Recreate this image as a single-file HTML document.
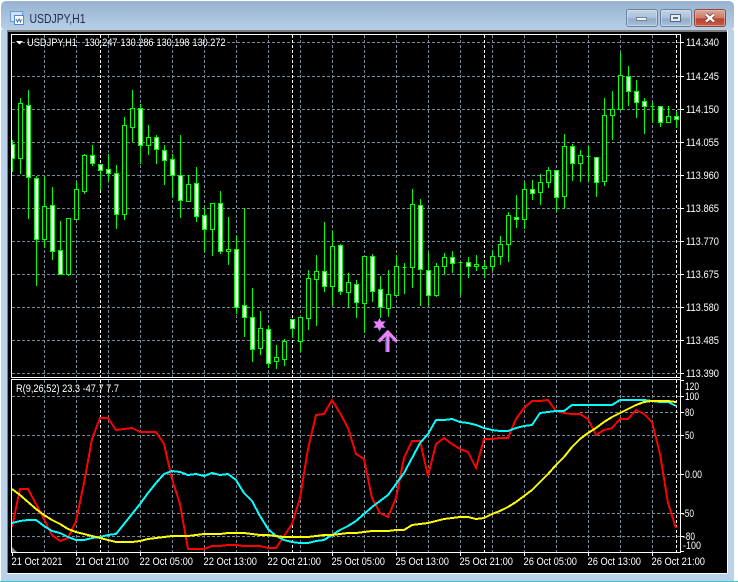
<!DOCTYPE html>
<html><head><meta charset="utf-8"><title>USDJPY,H1</title>
<style>
html,body{margin:0;padding:0;background:#fff;width:738px;height:582px;overflow:hidden}
svg{display:block}
text{font-family:"Liberation Sans",sans-serif}
.l{font-size:11px;fill:#fff}
</style></head><body>
<svg width="738" height="582" viewBox="0 0 738 582" xmlns="http://www.w3.org/2000/svg">
<defs>
<linearGradient id="tb" x1="0" y1="0" x2="0" y2="1"><stop offset="0" stop-color="#96b2cf"/><stop offset="1" stop-color="#b8d0e8"/></linearGradient>
<linearGradient id="bb" x1="0" y1="0" x2="0" y2="1"><stop offset="0" stop-color="#c4d5e7"/><stop offset=".5" stop-color="#a9bfd7"/><stop offset=".55" stop-color="#91abc8"/><stop offset="1" stop-color="#a9c2dc"/></linearGradient>
<linearGradient id="rb" x1="0" y1="0" x2="0" y2="1"><stop offset="0" stop-color="#dbaa9d"/><stop offset=".5" stop-color="#cc7a66"/><stop offset=".55" stop-color="#b8412d"/><stop offset="1" stop-color="#c4614a"/></linearGradient>
<clipPath id="mc"><rect x="12" y="35" width="668" height="342"/></clipPath>
<clipPath id="sc"><rect x="12" y="380" width="668" height="172"/></clipPath>
</defs>
<rect x="1" y="1" width="733" height="30" rx="5" fill="url(#tb)"/>
<rect x="1" y="30" width="733" height="551" fill="#b9d1ea"/>
<rect x="0" y="581" width="738" height="1" fill="#3cc5cc"/>
<rect x="7" y="30" width="721" height="544" fill="#fff"/>
<rect x="7" y="30" width="720" height="2" fill="#7c7c7c"/>
<rect x="7" y="30" width="1" height="543" fill="#7c7c7c"/>
<rect x="8" y="32" width="719" height="541" fill="#000"/>

<!-- title -->
<rect x="10.5" y="11.5" width="12" height="10" fill="#cfe2f7" stroke="#6d9bd1"/>
<rect x="14.5" y="15.5" width="9" height="9" fill="#fff" stroke="#5b88c4"/>
<path d="M16 19l1.5 3 1.5-3 1.5 3 1-3" fill="none" stroke="#3f74b8"/>
<text x="29.5" y="23" font-size="12.5" fill="#1f2a4c" textLength="56" lengthAdjust="spacingAndGlyphs">USDJPY,H1</text>

<!-- buttons -->
<rect x="626.5" y="9.5" width="31" height="17" rx="2.5" fill="url(#bb)" stroke="#6d8199"/>
<rect x="627.5" y="10.5" width="29" height="15" rx="1.5" fill="none" stroke="#dbe6f1" stroke-opacity=".55"/>
<rect x="636.5" y="17.5" width="10" height="3" fill="#eef2f7" stroke="#74859a"/>
<rect x="660.5" y="9.5" width="31" height="17" rx="2.5" fill="url(#bb)" stroke="#6d8199"/>
<rect x="661.5" y="10.5" width="29" height="15" rx="1.5" fill="none" stroke="#dbe6f1" stroke-opacity=".55"/>
<rect x="670.5" y="14.5" width="10" height="7" fill="#e6edf5" stroke="#56677a"/>
<rect x="673" y="17" width="5" height="2" fill="#5d6f84"/>
<rect x="694.5" y="9.5" width="31" height="17" rx="2.5" fill="url(#rb)" stroke="#8d4a3c"/>
<rect x="695.5" y="10.5" width="29" height="15" rx="1.5" fill="none" stroke="#efc9be" stroke-opacity=".5"/>
<path d="M706 14.5l8 7M714 14.5l-8 7" stroke="#7a3a30" stroke-width="4"/>
<path d="M706 14.5l8 7M714 14.5l-8 7" stroke="#fff" stroke-width="2.4"/>

<!-- main grid -->
<g clip-path="url(#mc)" shape-rendering="crispEdges" fill="none">
<path stroke="#778899" stroke-dasharray="3 2" d="M12 42.5H680M12 76.5H680M12 109.5H680M12 142.5H680M12 175.5H680M12 208.5H680M12 241.5H680M12 274.5H680M12 307.5H680M12 340.5H680M12 373.5H680"/>
<path stroke="#778899" stroke-dasharray="3 2" d="M44.5 35V377M76.5 35V377M108.5 35V377M140.5 35V377M172.5 35V377M204.5 35V377M236.5 35V377M268.5 35V377M300.5 35V377M332.5 35V377M364.5 35V377M396.5 35V377M428.5 35V377M460.5 35V377M492.5 35V377M524.5 35V377M556.5 35V377M588.5 35V377M620.5 35V377M652.5 35V377"/>
<path stroke="#fff" stroke-dasharray="3 2" d="M100.5 35V377M292.5 35V377M484.5 35V377M676.5 35V377"/>
<!-- wicks -->
<path stroke="#00ff00" d="M12.5 140V172M20.5 98V174M28.5 90V219M36.5 176V286M44.5 176V248M52.5 187V260M60.5 221V275M68.5 218V276M76.5 182V220M84.5 154V194M92.5 145V166M100.5 164V190M108.5 154V181M116.5 165V229M124.5 117V220M132.5 90V142M140.5 104V164M148.5 125V155M156.5 135V164M164.5 145V185M172.5 154V198M180.5 135V218M188.5 175V202M196.5 167V222M204.5 207V252M212.5 203V256M220.5 191V254M228.5 217V265M236.5 236V314M244.5 208V337M252.5 288V362M260.5 311V355M268.5 326V368M276.5 345V369M284.5 339V366M292.5 319V338M300.5 317V352M308.5 270V330M316.5 255V326M324.5 222V292M332.5 231V306M340.5 244V295M348.5 273V308M356.5 280V318M364.5 256V333M372.5 254V302M380.5 276V318M388.5 270V317M396.5 255V296M404.5 263V294M412.5 189V288M420.5 199V306M428.5 253V306M436.5 263V297M444.5 253V275M452.5 251V273M460.5 262V295M468.5 257V278M476.5 255V271M484.5 261V278M492.5 250V271M500.5 236V265M508.5 212V262M516.5 195V228M524.5 182V229M532.5 180V200M540.5 174V205M548.5 167V188M556.5 170V211M564.5 134V209M572.5 144V181M580.5 150V182M588.5 146V181M596.5 157V197M604.5 98V186M612.5 91V140M620.5 53V110M628.5 66V106M636.5 80V118M644.5 98V134M652.5 102V123M660.5 106V127M668.5 106V123M676.5 111V128"/>
<!-- hollow bodies -->
<path stroke="#00ff00" fill="#000" d="M18.5 103.5h4V158.5h-4zM42.5 206.5h4V239.5h-4zM66.5 218.5h4V274.5h-4zM74.5 189.5h4V219.5h-4zM82.5 155.5h4V191.5h-4zM122.5 125.5h4V214.5h-4zM130.5 108.5h4V127.5h-4zM146.5 137.5h4V145.5h-4zM186.5 184.5h4V201.5h-4zM210.5 203.5h4V229.5h-4zM226.5 249.5h4V251.5h-4zM258.5 328.5h4V348.5h-4zM274.5 357.5h4V361.5h-4zM282.5 341.5h4V359.5h-4zM298.5 317.5h4V341.5h-4zM306.5 278.5h4V318.5h-4zM314.5 271.5h4V279.5h-4zM330.5 246.5h4V286.5h-4zM346.5 282.5h4V292.5h-4zM362.5 256.5h4V303.5h-4zM386.5 294.5h4V308.5h-4zM394.5 266.5h4V295.5h-4zM402.5 267.5h4V267.5h-4zM410.5 204.5h4V267.5h-4zM434.5 266.5h4V295.5h-4zM442.5 257.5h4V266.5h-4zM458.5 262.5h4V262.5h-4zM474.5 264.5h4V266.5h-4zM482.5 266.5h4V268.5h-4zM490.5 256.5h4V266.5h-4zM498.5 244.5h4V256.5h-4zM506.5 215.5h4V244.5h-4zM522.5 189.5h4V219.5h-4zM538.5 182.5h4V192.5h-4zM546.5 170.5h4V182.5h-4zM562.5 146.5h4V196.5h-4zM578.5 155.5h4V163.5h-4zM586.5 156.5h4V156.5h-4zM602.5 115.5h4V181.5h-4zM610.5 109.5h4V115.5h-4zM618.5 75.5h4V109.5h-4zM650.5 106.5h4V106.5h-4zM666.5 116.5h4V122.5h-4z"/>
<!-- white bodies -->
<path stroke="#00ff00" fill="#fff" d="M10.5 144.5h4V158.5h-4zM26.5 105.5h4V177.5h-4zM34.5 178.5h4V239.5h-4zM50.5 205.5h4V251.5h-4zM58.5 250.5h4V274.5h-4zM90.5 155.5h4V163.5h-4zM98.5 164.5h4V170.5h-4zM106.5 169.5h4V173.5h-4zM114.5 173.5h4V214.5h-4zM138.5 108.5h4V145.5h-4zM154.5 137.5h4V149.5h-4zM162.5 150.5h4V160.5h-4zM170.5 159.5h4V175.5h-4zM178.5 175.5h4V200.5h-4zM194.5 183.5h4V216.5h-4zM202.5 215.5h4V229.5h-4zM218.5 203.5h4V251.5h-4zM234.5 249.5h4V307.5h-4zM242.5 305.5h4V317.5h-4zM250.5 317.5h4V349.5h-4zM266.5 329.5h4V363.5h-4zM290.5 319.5h4V328.5h-4zM322.5 271.5h4V286.5h-4zM338.5 245.5h4V291.5h-4zM354.5 284.5h4V302.5h-4zM370.5 256.5h4V291.5h-4zM378.5 289.5h4V307.5h-4zM418.5 205.5h4V269.5h-4zM426.5 270.5h4V295.5h-4zM450.5 257.5h4V263.5h-4zM466.5 262.5h4V266.5h-4zM514.5 217.5h4V219.5h-4zM530.5 189.5h4V193.5h-4zM554.5 170.5h4V197.5h-4zM570.5 146.5h4V163.5h-4zM594.5 157.5h4V182.5h-4zM626.5 76.5h4V91.5h-4zM634.5 91.5h4V102.5h-4zM642.5 101.5h4V106.5h-4zM658.5 106.5h4V122.5h-4zM674.5 116.5h4V119.5h-4z"/>
</g>

<!-- star and arrow -->
<path d="M379.5 318l1.8 3.6 4.2-.4-2.4 3.4 2.4 3.4-4.2-.4-1.8 3.6-1.8-3.6-4.2.4 2.4-3.4-2.4-3.4 4.2.4z" fill="#ee82ee" stroke="#5a4fc0" stroke-width=".5"/>
<path d="M379 341.5l9-9.5 9 9.5M387.5 332.5V352" fill="none" stroke="#5c5ce0" stroke-width="3" transform="translate(-.8 0)"/>
<path d="M379 341.5l9-9.5 9 9.5M388 332.5V352" fill="none" stroke="#ee82ee" stroke-width="3"/>

<!-- main border -->
<g fill="#fff" shape-rendering="crispEdges">
<rect x="11" y="34" width="670" height="1"/>
<rect x="11" y="34" width="1" height="344"/>
<rect x="11" y="377" width="670" height="1"/>
<rect x="11" y="379" width="670" height="1"/>
<rect x="11" y="379" width="1" height="174"/>
<rect x="11" y="552" width="670" height="1"/>
<rect x="680" y="34" width="1" height="519"/>
</g>
<!-- main labels -->
<path d="M16 41h7l-3.5 3.5z" fill="#fff"/>
<text class="l" x="27" y="46" textLength="50" lengthAdjust="spacingAndGlyphs">USDJPY,H1</text>
<text class="l" x="84.5" y="46" textLength="33" lengthAdjust="spacingAndGlyphs">130.247</text>
<text class="l" x="120.5" y="46" textLength="33" lengthAdjust="spacingAndGlyphs">130.286</text>
<text class="l" x="156.5" y="46" textLength="33" lengthAdjust="spacingAndGlyphs">130.198</text>
<text class="l" x="192.5" y="46" textLength="33" lengthAdjust="spacingAndGlyphs">130.272</text>
<g stroke="#fff" shape-rendering="crispEdges"><path d="M681 42.5h3M681 76.5h3M681 109.5h3M681 142.5h3M681 175.5h3M681 208.5h3M681 241.5h3M681 274.5h3M681 307.5h3M681 340.5h3M681 373.5h3"/></g>
<text class="l" x="686" y="46" textLength="33" lengthAdjust="spacingAndGlyphs">114.340</text>
<text class="l" x="686" y="80" textLength="33" lengthAdjust="spacingAndGlyphs">114.245</text>
<text class="l" x="686" y="113" textLength="33" lengthAdjust="spacingAndGlyphs">114.150</text>
<text class="l" x="686" y="146" textLength="33" lengthAdjust="spacingAndGlyphs">114.055</text>
<text class="l" x="686" y="179" textLength="33" lengthAdjust="spacingAndGlyphs">113.960</text>
<text class="l" x="686" y="212" textLength="33" lengthAdjust="spacingAndGlyphs">113.865</text>
<text class="l" x="686" y="245" textLength="33" lengthAdjust="spacingAndGlyphs">113.770</text>
<text class="l" x="686" y="278" textLength="33" lengthAdjust="spacingAndGlyphs">113.675</text>
<text class="l" x="686" y="311" textLength="33" lengthAdjust="spacingAndGlyphs">113.580</text>
<text class="l" x="686" y="344" textLength="33" lengthAdjust="spacingAndGlyphs">113.485</text>
<text class="l" x="686" y="377" textLength="33" lengthAdjust="spacingAndGlyphs">113.390</text>

<!-- sub window -->
<g clip-path="url(#sc)" fill="none" shape-rendering="crispEdges">
<path stroke="#778899" stroke-dasharray="3 2" d="M12 396.5H680M12 435.5H680M12 474.5H680M12 513.5H680M12 536.5H680M580 412.5H680"/>
<path stroke="#778899" stroke-dasharray="3 2" d="M44.5 380V552M76.5 380V552M108.5 380V552M140.5 380V552M172.5 380V552M204.5 380V552M236.5 380V552M268.5 380V552M300.5 380V552M332.5 380V552M364.5 380V552M396.5 380V552M428.5 380V552M460.5 380V552M492.5 380V552M524.5 380V552M556.5 380V552M588.5 380V552M620.5 380V552M652.5 380V552"/>
<path stroke="#fff" stroke-dasharray="3 2" d="M100.5 380V552M292.5 380V552M484.5 380V552M676.5 380V552"/>
<polyline stroke="#ff0000" stroke-width="2" points="12,527 20,489 28,489 36,504 44,519 52,535 60,541 68,538 76,521 84,483 92,439 100,418 108,418 116,430 124,429 132,428 140,432 148,432 156,432 164,444 172,479 180,504 188,549 196,549 204,549 212,546 220,546 228,545 236,545 244,546 252,546 260,546 268,548 276,548 284,536 292,524 300,498 308,449 316,415 324,414 332,400 340,413 348,428 356,454 364,459 372,498 380,513 388,517 396,498 404,458 412,441 420,441 428,476 436,444 444,438 452,444 460,449 468,452 476,468 484,439 492,439 500,438 508,438 516,419 524,408 532,401 540,401 548,400 556,411 564,413 572,414 580,414 588,419 596,435 604,430 612,428 620,419 628,419 636,410 644,414 652,422 660,454 668,503 676,528"/>
<polyline stroke="#00ffff" stroke-width="2" points="12,523 20,521 28,520 36,520 44,526 52,531 60,533 68,537 76,540 84,540 92,538 100,537 108,535 116,534 124,524 132,514 140,504 148,493 156,483 164,474 172,471 180,472 188,475 196,474 204,476 212,473 220,475 228,474 236,480 244,493 252,501 260,516 268,529 276,536 284,540 292,542 300,543 308,543 316,541 324,540 332,535 340,530 348,526 356,521 364,514 372,507 380,501 388,495 396,484 404,473 412,458 420,443 428,434 436,420 444,420 452,419 460,422 468,423 476,425 484,428 492,430 500,431 508,431 516,428 524,426 532,425 540,413 548,412 556,411 564,411 572,405 580,405 588,405 596,405 604,405 612,405 620,400 628,400 636,400 644,400 652,401 660,402 668,402 676,406"/>
<polyline stroke="#ffff00" stroke-width="2" points="12,489 20,495 28,502 36,509 44,515 52,520 60,524 68,529 76,532 84,534 92,536 100,538 108,540 116,542 124,542 132,542 140,541 148,539 156,538 164,537 172,536 180,536 188,536 196,535 204,534 212,534 220,534 228,533 236,533 244,533 252,534 260,535 268,535 276,536 284,537 292,537 300,537 308,537 316,536 324,535 332,535 340,534 348,533 356,533 364,532 372,531 380,531 388,531 396,530 404,530 412,525 420,524 428,523 436,521 444,519 452,518 460,517 468,517 476,519 484,518 492,514 500,511 508,507 516,502 524,496 532,490 540,482 548,474 556,465 564,457 572,447 580,439 588,433 596,428 604,422 612,417 620,413 628,409 636,405 644,402 652,401 660,401 668,401 676,402"/>
</g>
<path d="M12 547l5 5h-5z" fill="#8a8a8a"/>
<text class="l" x="16" y="392" textLength="103" lengthAdjust="spacingAndGlyphs">R(9,26,52) 23.3 -47.7 7.7</text>
<g stroke="#fff" shape-rendering="crispEdges"><path d="M681 380.5h3M681 396.5h3M681 412.5h3M681 435.5h3M681 474.5h3M681 513.5h3M681 536.5h3M681 551.5h3"/></g>
<text class="l" x="685" y="390" textLength="14" lengthAdjust="spacingAndGlyphs">120</text>
<text class="l" x="685" y="400" textLength="14" lengthAdjust="spacingAndGlyphs">100</text>
<text class="l" x="685" y="416" textLength="9" lengthAdjust="spacingAndGlyphs">80</text>
<text class="l" x="685" y="439" textLength="9" lengthAdjust="spacingAndGlyphs">50</text>
<text class="l" x="685" y="478" textLength="17" lengthAdjust="spacingAndGlyphs">0.00</text>
<text class="l" x="682" y="517" textLength="12" lengthAdjust="spacingAndGlyphs">-50</text>
<text class="l" x="683" y="540" textLength="12" lengthAdjust="spacingAndGlyphs">-80</text>
<text class="l" x="683" y="549" textLength="18" lengthAdjust="spacingAndGlyphs">-100</text>

<!-- time axis -->
<g stroke="#fff" shape-rendering="crispEdges"><path d="M12.5 553v3M76.5 553v3M140.5 553v3M204.5 553v3M268.5 553v3M332.5 553v3M396.5 553v3M460.5 553v3M524.5 553v3M588.5 553v3M652.5 553v3"/></g>
<text class="l" x="11.5" y="565" textLength="51" lengthAdjust="spacingAndGlyphs">21 Oct 2021</text>
<text class="l" x="75.5" y="565" textLength="53.5" lengthAdjust="spacingAndGlyphs">21 Oct 21:00</text>
<text class="l" x="139.5" y="565" textLength="53.5" lengthAdjust="spacingAndGlyphs">22 Oct 05:00</text>
<text class="l" x="203.5" y="565" textLength="53.5" lengthAdjust="spacingAndGlyphs">22 Oct 13:00</text>
<text class="l" x="267.5" y="565" textLength="53.5" lengthAdjust="spacingAndGlyphs">22 Oct 21:00</text>
<text class="l" x="331.5" y="565" textLength="53.5" lengthAdjust="spacingAndGlyphs">25 Oct 05:00</text>
<text class="l" x="395.5" y="565" textLength="53.5" lengthAdjust="spacingAndGlyphs">25 Oct 13:00</text>
<text class="l" x="459.5" y="565" textLength="53.5" lengthAdjust="spacingAndGlyphs">25 Oct 21:00</text>
<text class="l" x="523.5" y="565" textLength="53.5" lengthAdjust="spacingAndGlyphs">26 Oct 05:00</text>
<text class="l" x="587.5" y="565" textLength="53.5" lengthAdjust="spacingAndGlyphs">26 Oct 13:00</text>
<text class="l" x="651.5" y="565" textLength="53.5" lengthAdjust="spacingAndGlyphs">26 Oct 21:00</text>
</svg>
</body></html>
